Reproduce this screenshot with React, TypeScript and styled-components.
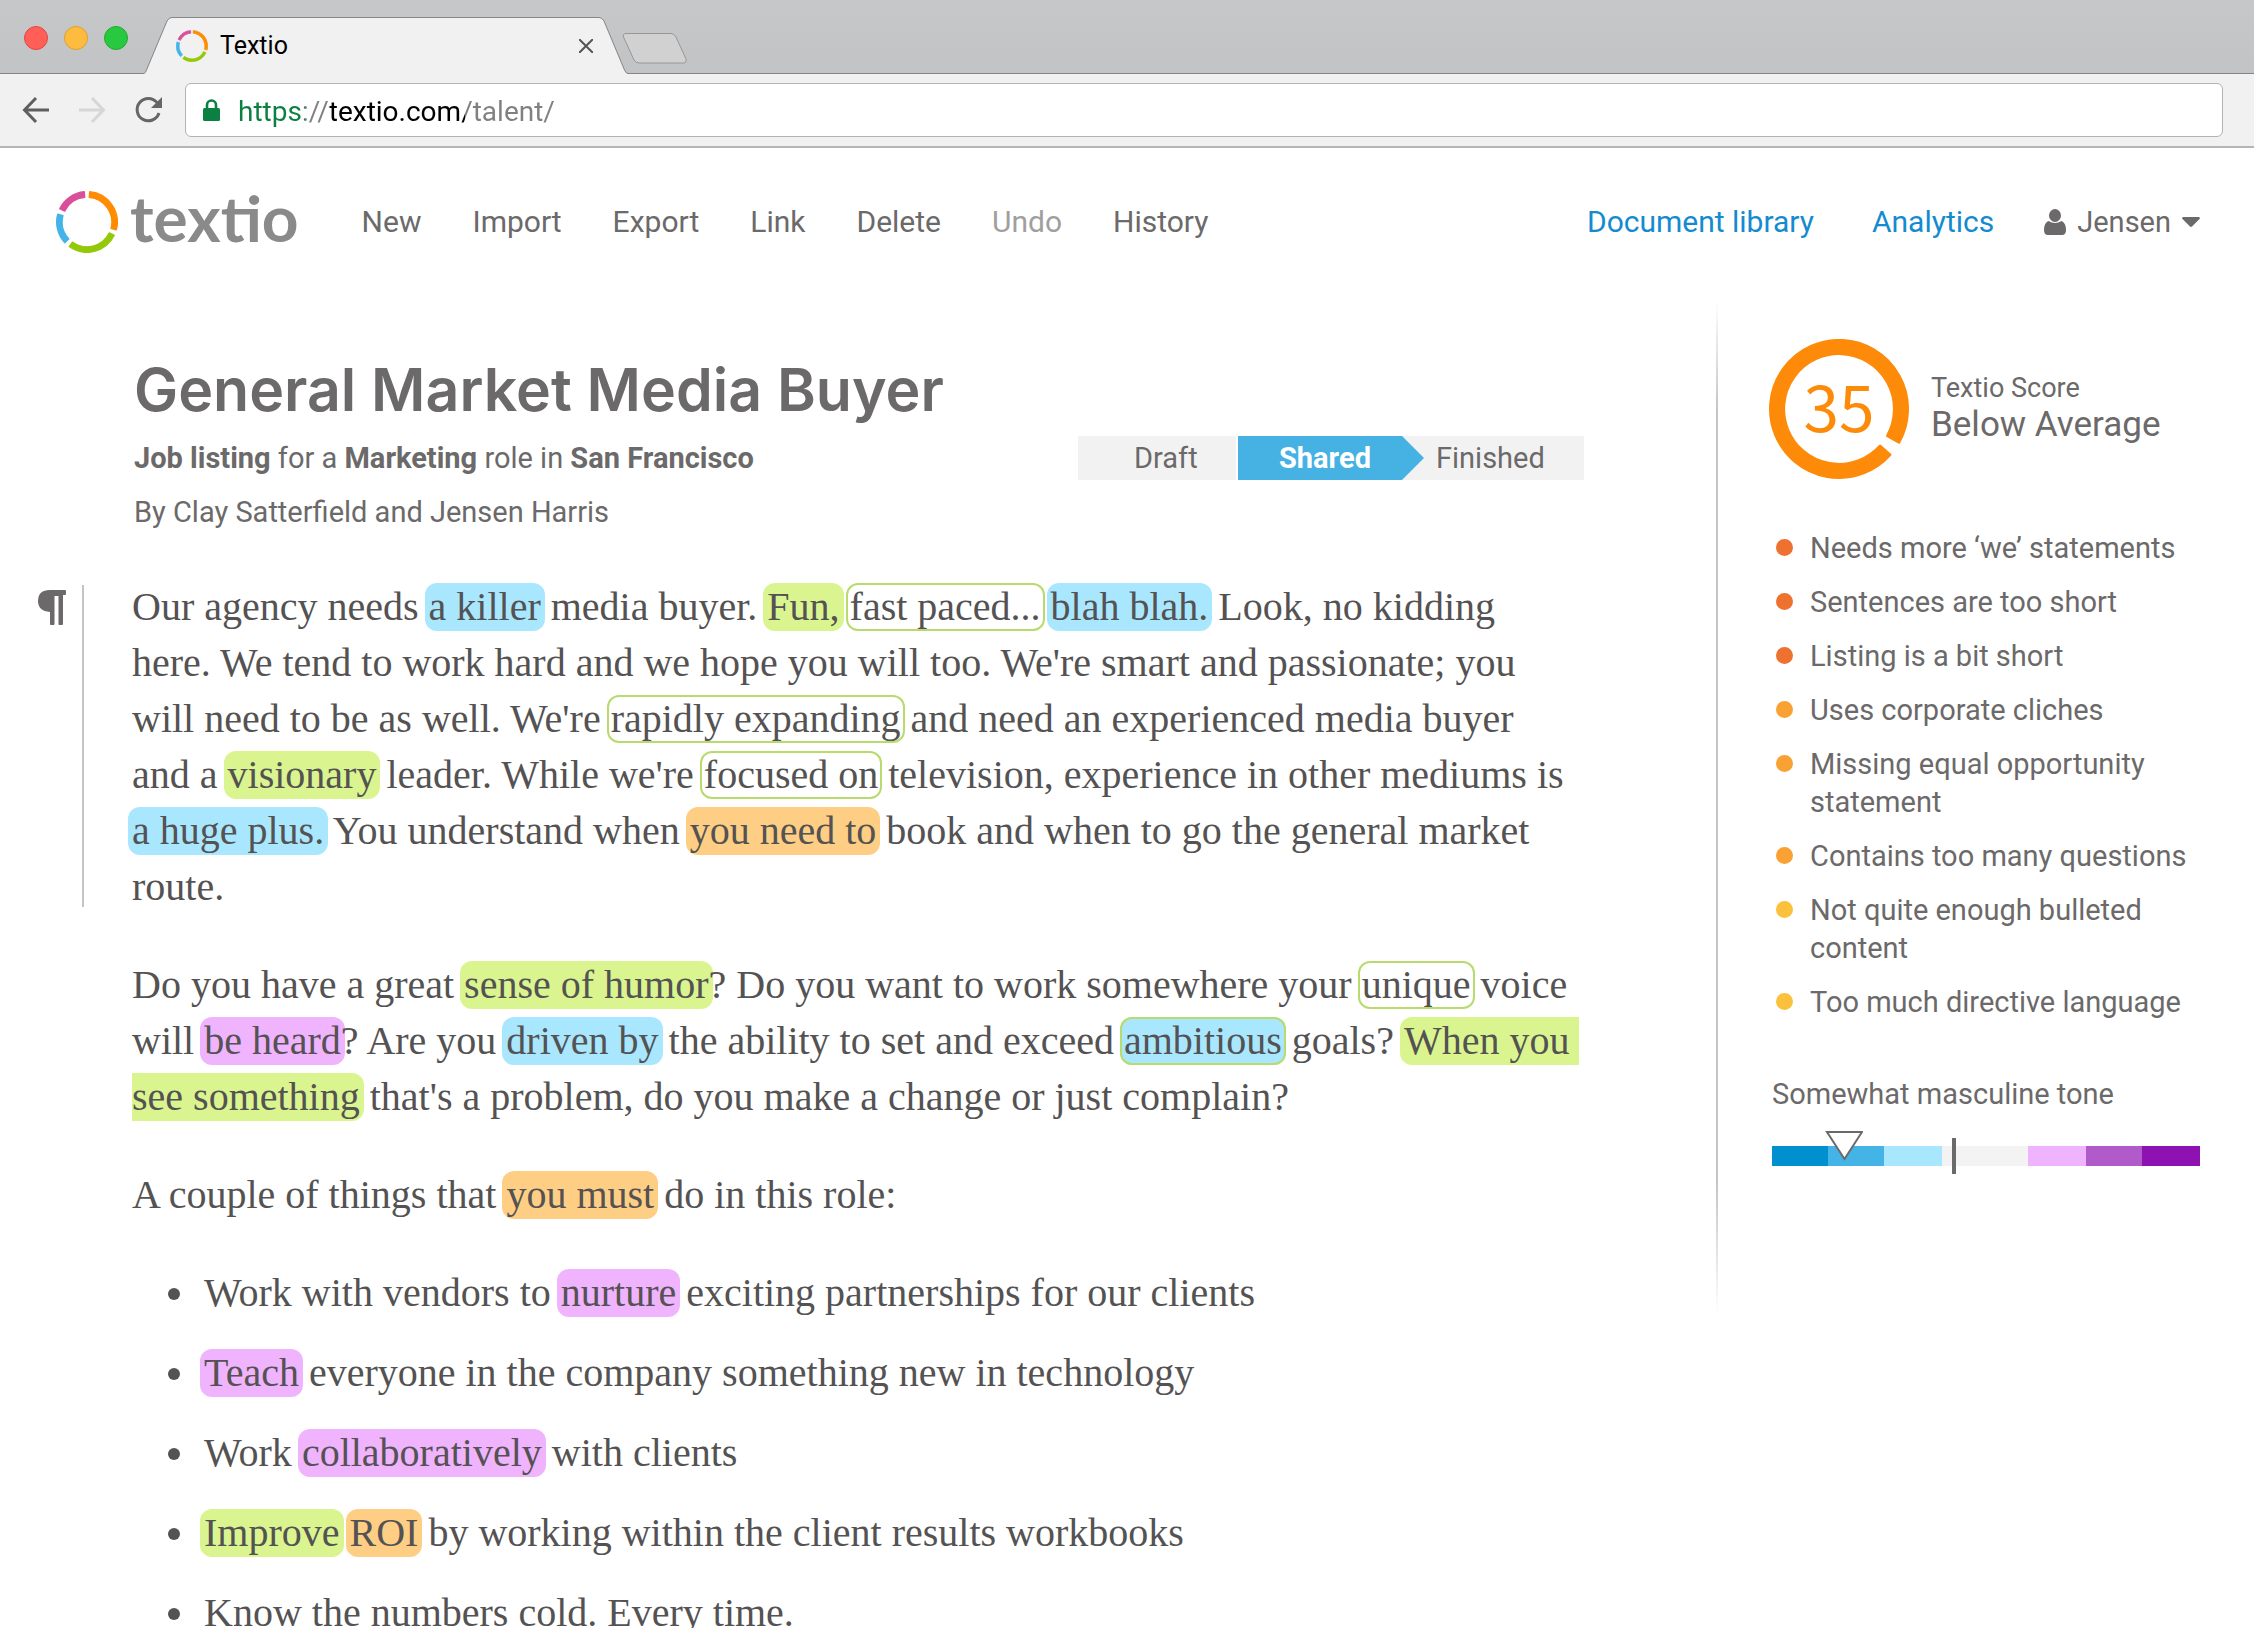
import React from "react";
import styled, { createGlobalStyle, css } from "styled-components";

const ink = "#6b6969";
const body = "#545252";
const sans = `Roboto, "Liberation Sans", sans-serif`;
const serif = `"Liberation Serif", serif`;

const GlobalStyle = createGlobalStyle`
  *, *::before, *::after { box-sizing: border-box; }
  body { margin: 0; background: #fff; color: ${ink}; font-family: ${sans}; }
  button, input { font: inherit; color: inherit; }
  h1, h2, p, ul, ol { margin: 0; padding: 0; }
`;

const Window = styled.div`
  display: flex;
  flex-direction: column;
  height: 100vh;
  overflow: hidden;
`;

/* ---------- browser chrome ---------- */

const TabStrip = styled.div`
  display: flex;
  flex: none;
  align-items: flex-end;
  height: 74px;
  padding-left: 24px;
  background: linear-gradient(#c5c7c9, #c2c3c5);
  box-shadow: inset 0 -1px #858585;
`;

const Lights = styled.div`
  display: flex;
  gap: 16px;
  align-self: flex-start;
  padding-top: 26px;
`;

const Light = styled.button<{ $fill: string; $edge: string }>`
  width: 24px;
  height: 24px;
  padding: 0;
  border: 1px solid ${(p) => p.$edge};
  border-radius: 50%;
  background: ${(p) => p.$fill};
`;

const Tab = styled.div`
  position: relative;
  display: flex;
  align-items: center;
  width: 484px;
  height: 57px;
  margin-left: 16px;
  padding: 0 35px 0 32px;
`;

const TabShape = styled.svg`
  position: absolute;
  inset: 0;
  width: 100%;
  height: 100%;
`;

const TabTitle = styled.span`
  position: relative;
  flex: 1;
  margin-left: 12px;
  color: #000;
  font-size: 25px;
  line-height: 32px;
`;

const TabIcon = styled.span`
  position: relative;
  display: flex;
`;

const IconButton = styled.button`
  position: relative;
  display: flex;
  padding: 0;
  border: 0;
  background: none;
`;

const NewTab = styled(IconButton)`
  align-self: flex-start;
  margin: 32px 0 0 -6px;
`;

const Toolbar = styled.div`
  display: flex;
  flex: none;
  align-items: center;
  gap: 28px;
  height: 74px;
  padding: 0 31px 0 22px;
  background: #f1f1f1;
  border-bottom: 2px solid #b5b5b5;
`;

const Address = styled.label`
  display: flex;
  flex: 1;
  align-items: center;
  height: 54px;
  margin-left: -5px;
  padding-left: 17px;
  gap: 18px;
  background: #fff;
  border: 1px solid #b3b3b3;
  border-radius: 6px;
`;

const AddressInput = styled.input`
  flex: 1;
  height: 40px;
  padding: 2px 0 0;
  border: 0;
  outline: 0;
  color: #000;
  font-size: 28px;
  line-height: 38px;
  background: linear-gradient(
    90deg,
    #0b8043 0 67px,
    #808080 67px 92px,
    #000 92px 227px,
    #808080 227px
  );
  background-clip: text;
  -webkit-background-clip: text;
  -webkit-text-fill-color: transparent;
`;

/* ---------- application header ---------- */

const Page = styled.div`
  flex: 1;
  min-height: 0;
  overflow: auto;
  scrollbar-width: none;
`;

const Header = styled.header`
  display: flex;
  align-items: center;
  height: 152px;
  padding: 0 54px 4px 56px;
`;

const Brand = styled.a`
  display: flex;
  align-items: center;
  gap: 12px;
  color: #8a8a8a;
  font-family: Lato, sans-serif;
  font-size: 64px;
  font-weight: 700;
  line-height: 64px;
  text-decoration: none;
`;

const BrandName = styled.span`
  padding-bottom: 8px;
`;

const Actions = styled.nav`
  display: flex;
  gap: 51px;
  margin-left: 63px;
`;

const Action = styled.button`
  padding: 0;
  border: 0;
  background: none;
  color: ${ink};
  font-size: 30px;
  line-height: 36px;
  &:disabled {
    color: #a09f9f;
  }
`;

const Account = styled.nav`
  display: flex;
  align-items: center;
  gap: 58px;
  margin-left: auto;
`;

const AccountLink = styled.a`
  color: #148bcf;
  font-size: 30px;
  line-height: 36px;
  text-decoration: none;
`;

const UserButton = styled(Action)`
  display: flex;
  align-items: center;
  gap: 11px;
  margin-left: -8px;
  font-size: 29px;
`;

/* ---------- document ---------- */

const Columns = styled.div`
  display: grid;
  grid-template-columns: minmax(0, 1fr) 538px;
`;

const Document = styled.main`
  padding: 58px 132px 0 38px;
`;

const Heading = styled.div`
  display: flex;
  align-items: flex-start;
  justify-content: space-between;
  padding-left: 96px;
`;

const Title = styled.h1`
  font-family: Inter, sans-serif;
  font-size: 59px;
  font-weight: 600;
  line-height: 64px;
`;

const Byline = styled.p`
  font-size: 29px;
  line-height: 36px;
  margin-top: 18px;
  b {
    font-weight: 700;
  }
`;

const TitleBlock = styled.div`
  white-space: nowrap;
`;

const Stages = styled.ol`
  display: flex;
  margin-top: 78px;
  list-style: none;
`;

const Stage = styled.button<{ $current?: boolean; $width: number; $indent: number }>`
  position: relative;
  display: block;
  width: ${(p) => p.$width}px;
  height: 44px;
  padding: 0 0 0 ${(p) => p.$indent}px;
  border: 0;
  background: #f2f2f2;
  color: ${ink};
  font-size: 29px;
  line-height: 44px;
  text-align: left;
  ${(p) =>
    p.$current &&
    css`
      z-index: 1;
      margin-left: 2px;
      background: #46b2e4;
      color: #fff;
      font-weight: 700;
      &::after {
        content: "";
        position: absolute;
        top: 0;
        left: 100%;
        border: 22px solid transparent;
        border-right-width: 0;
        border-left-color: #46b2e4;
      }
    `}
`;

const Editor = styled.article`
  display: flex;
  flex-direction: column;
  gap: 42px;
  margin-top: 49px;
  color: ${body};
  font-family: ${serif};
  font-size: 40px;
  line-height: 56px;
  white-space: nowrap;
`;

const Block = styled.div`
  padding-left: 94px;
`;

const ActiveBlock = styled.div`
  display: flex;
`;

const Marker = styled.div`
  flex: none;
  width: 46px;
  margin: 6px 48px 8px 0;
  border-right: 2px solid #c4c4c4;
`;

const Bullets = styled.ul`
  display: flex;
  flex-direction: column;
  gap: 24px;
  padding-left: 130px;
  list-style: none;
`;

const Bullet = styled.li`
  display: flex;
  align-items: center;
  &::before {
    content: "";
    width: 12px;
    height: 12px;
    margin: 2px 24px 0 0;
    border-radius: 50%;
    background: ${body};
  }
`;

const tones = {
  blue: "#a9e7ff",
  green: "#daf58f",
  orange: "#ffce85",
  purple: "#f0b4fe",
  plain: "transparent",
};

const Mark = styled.mark<{ $tone: keyof typeof tones; $outlined?: boolean }>`
  margin: 0 -4px;
  padding: 1px 4px 2px;
  border-radius: 12px;
  color: inherit;
  background: ${(p) => tones[p.$tone]};
  ${(p) => p.$outlined && "box-shadow: inset 0 0 0 2px #b9db6e;"}
`;

/* ---------- sidebar ---------- */

const Sidebar = styled.aside`
  position: relative;
  height: 1014px;
  padding: 39px 54px 0 56px;
  &::before {
    content: "";
    position: absolute;
    inset: 0 auto 0 0;
    width: 2px;
    background: linear-gradient(transparent, #c4c4c4 11%, #c4c4c4 87%, transparent);
  }
`;

const Score = styled.section`
  display: flex;
  align-items: center;
  margin-left: -3px;
`;

const Gauge = styled.div`
  position: relative;
  display: flex;
  align-items: center;
  justify-content: center;
  width: 140px;
  height: 140px;
  padding-bottom: 10px;
  color: #fd8b09;
  font-family: "Noto Sans CJK JP", sans-serif;
  font-size: 64px;
  line-height: 64px;
  svg {
    position: absolute;
    inset: 0;
  }
`;

const ScoreText = styled.div`
  margin-left: 22px;
  padding-bottom: 4px;
`;

const ScoreLabel = styled.h2`
  font-size: 27px;
  font-weight: 400;
  line-height: 36px;
`;

const ScoreValue = styled.p`
  font-size: 35px;
  line-height: 38px;
`;

const Tips = styled.ul`
  display: flex;
  flex-direction: column;
  gap: 16px;
  margin-top: 50px;
  padding-left: 4px;
  list-style: none;
`;

const Tip = styled.li<{ $color: string }>`
  display: flex;
  font-size: 29px;
  line-height: 38px;
  white-space: nowrap;
  &::before {
    content: "";
    flex: none;
    width: 17px;
    height: 17px;
    margin: 10px 17px 0 0;
    border-radius: 50%;
    background: ${(p) => p.$color};
  }
`;

const ToneLabel = styled.h2`
  margin-top: 54px;
  font-size: 29px;
  font-weight: 400;
  line-height: 38px;
`;

const ToneBar = styled.div`
  position: relative;
  display: flex;
  height: 20px;
  margin-top: 33px;
`;

const ToneStep = styled.span<{ $color: string; $grow: number }>`
  flex: ${(p) => p.$grow} 1 0;
  background: ${(p) => p.$color};
`;

const ToneCenter = styled.span`
  position: absolute;
  top: -8px;
  left: 42%;
  width: 4px;
  height: 36px;
  background: ${ink};
`;

const TonePointer = styled.svg`
  position: absolute;
  top: -15px;
  left: 12%;
`;

/* ---------- drawings ---------- */

const point = (deg: number, r: number) => {
  const a = (deg * Math.PI) / 180;
  return `${(50 + r * Math.cos(a)).toFixed(2)} ${(50 + r * Math.sin(a)).toFixed(2)}`;
};

/* A closed ring segment; its rounded outline adds one unit on every side. */
const segment = (from: number, to: number, inner: number, outer: number) => {
  const large = to - from > 180 ? 1 : 0;
  return (
    `M${point(from, outer)}A${outer} ${outer} 0 ${large} 1 ${point(to, outer)}` +
    `L${point(to, inner)}A${inner} ${inner} 0 ${large} 0 ${point(from, inner)}Z`
  );
};

const ringParts = [
  { color: "#ff8b00", from: -85, to: 15 },
  { color: "#94c90a", from: 26, to: 126 },
  { color: "#43b4e8", from: 137, to: 195 },
  { color: "#d94f9a", from: 206, to: 265 },
];

const Ring = ({ size }: { size: number }) => (
  <svg width={size} height={size} viewBox="0 0 100 100" strokeWidth="2" strokeLinejoin="round" aria-hidden="true">
    {ringParts.map((p) => (
      <path key={p.color} d={segment(p.from, p.to, 40, 49)} fill={p.color} stroke={p.color} />
    ))}
  </svg>
);

const tips: [string, string[]][] = [
  ["#ee7130", ["Needs more ‘we’ statements"]],
  ["#ee7130", ["Sentences are too short"]],
  ["#ee7130", ["Listing is a bit short"]],
  ["#f9a133", ["Uses corporate cliches"]],
  ["#f9a133", ["Missing equal opportunity", "statement"]],
  ["#f9a133", ["Contains too many questions"]],
  ["#fbc13d", ["Not quite enough bulleted", "content"]],
  ["#fbc13d", ["Too much directive language"]],
];

const toneSteps: [string, number][] = [
  ["#0090d0", 56],
  ["#44b3e6", 56],
  ["#a9e7ff", 58],
  ["#f3f3f3", 86],
  ["#f0b4fe", 58],
  ["#b05bc9", 56],
  ["#8e11b1", 58],
];

const Chrome = () => (
  <>
    <TabStrip>
      <Lights>
        <Light $fill="#ff5f57" $edge="#e2463f" aria-label="Close window" />
        <Light $fill="#fdbc40" $edge="#e0a028" aria-label="Minimize window" />
        <Light $fill="#28c940" $edge="#1dad2f" aria-label="Zoom window" />
      </Lights>
      <Tab>
        <TabShape viewBox="0 0 484 57" preserveAspectRatio="none" aria-hidden="true">
          <path
            d="M0 56.500Q1.500 56 2.500 53L23 4Q25 .5 28 .5H455Q458 .5 460 4L480.500 53Q482 56.500 484 56.500V58H0Z"
            fill="#f1f1f1"
          />
          <path
            d="M0 56.500Q1.500 56 2.500 53L23 4Q25 .5 28 .5H455Q458 .5 460 4L480.500 53Q482 56.500 484 56.500"
            fill="none"
            stroke="#858585"
          />
        </TabShape>
        <TabIcon>
          <Ring size={32} />
        </TabIcon>
        <TabTitle>Textio</TabTitle>
        <IconButton aria-label="Close tab">
          <svg width="14" height="14" viewBox="0 0 14 14" stroke="#555" strokeWidth="2">
            <path d="M0 0L14 14M14 0L0 14" />
          </svg>
        </IconButton>
      </Tab>
      <NewTab aria-label="New tab">
        <svg width="66" height="32" viewBox="0 0 66 32" fill="#d1d1d1" stroke="#979797">
          <path d="M4 1.5H49Q52 1.5 54 5L64 27Q65 31 61 31H17Q14 31 12 28L1.500 5Q.5 1.500 4 1.500Z" />
        </svg>
      </NewTab>
    </TabStrip>
    <Toolbar>
      <IconButton aria-label="Back">
        <svg width="28" height="28" viewBox="0 0 28 28" fill="none" stroke="#5f5f5f" strokeWidth="3">
          <path d="M27 14H3M14 2L2.500 14L14 26" />
        </svg>
      </IconButton>
      <IconButton aria-label="Forward" disabled>
        <svg width="28" height="28" viewBox="0 0 28 28" fill="none" stroke="#d6d6d6" strokeWidth="3">
          <path d="M1 14H25M14 2L25.500 14L14 26" />
        </svg>
      </IconButton>
      <IconButton aria-label="Reload">
        <svg width="28" height="28" viewBox="0 0 28 28" fill="none" stroke="#666" strokeWidth="3">
          <path d="M23 6.500A11.200 11.200 0 1 0 25 17" />
          <path d="M28 1V12H17Z" fill="#666" stroke="none" />
        </svg>
      </IconButton>
      <Address>
        <svg width="17" height="22" viewBox="0 0 17 22" aria-hidden="true">
          <path d="M4 10V6a4.500 4.500 0 0 1 9 0V10" fill="none" stroke="#0b8043" strokeWidth="2.600" />
          <rect y="9" width="17" height="13" rx="1.500" fill="#0b8043" />
        </svg>
        <AddressInput aria-label="Address" defaultValue="https://textio.com/talent/" spellCheck={false} />
      </Address>
    </Toolbar>
  </>
);

const AppHeader = () => (
  <Header>
    <Brand href="#home">
      <Ring size={62} />
      <BrandName>textio</BrandName>
    </Brand>
    <Actions>
      {["New", "Import", "Export", "Link", "Delete", "Undo", "History"].map((name) => (
        <Action key={name} disabled={name === "Undo"}>
          {name}
        </Action>
      ))}
    </Actions>
    <Account>
      <AccountLink href="#library">Document library</AccountLink>
      <AccountLink href="#analytics">Analytics</AccountLink>
      <UserButton aria-haspopup="menu">
        <svg width="22" height="26" viewBox="0 0 22 26" fill={ink} aria-hidden="true">
          <ellipse cx="11" cy="6.500" rx="6" ry="6.500" />
          <path d="M4.500 12Q11 16 17.500 12Q22 14 22 21Q22 26 18 26H4Q0 26 0 21Q0 14 4.500 12Z" />
        </svg>
        Jensen
        <svg width="18" height="10" viewBox="0 0 18 10" fill={ink} aria-hidden="true">
          <path d="M1 0H17Q18.500 .5 17.500 2L10 9.500Q9 10.300 8 9.500L.5 2Q-.5 .5 1 0Z" />
        </svg>
      </UserButton>
    </Account>
  </Header>
);

const Listing = () => (
  <Document>
    <Heading>
      <TitleBlock>
        <Title>General Market Media Buyer</Title>
        <Byline>
          <b>Job listing</b> for a <b>Marketing</b> role in <b>San Francisco</b>
        </Byline>
        <Byline>By Clay Satterfield and Jensen Harris</Byline>
      </TitleBlock>
      <Stages>
        <li>
          <Stage $width={158} $indent={56}>Draft</Stage>
        </li>
        <li>
          <Stage $width={164} $indent={41} $current aria-current="step">Shared</Stage>
        </li>
        <li>
          <Stage $width={182} $indent={34}>Finished</Stage>
        </li>
      </Stages>
    </Heading>
    <Editor>
      <ActiveBlock>
        <Marker>
          <svg width="28" height="36" viewBox="0 0 28 36" fill={ink} aria-hidden="true">
            <path d="M12 0H27Q28 0 28 1V4Q28 5 27 5H25V34Q25 35 24 35H21.500Q20.500 35 20.500 34V6H16.500V34Q16.500 35 15.500 35H13Q12 35 12 34V22Q0 21 0 11Q0 0 12 0Z" />
          </svg>
        </Marker>
        <p>
          Our agency needs <Mark $tone="blue">a killer</Mark> media buyer. <Mark $tone="green">Fun,</Mark>{" "}
          <Mark $tone="plain" $outlined>fast paced...</Mark> <Mark $tone="blue">blah blah.</Mark> Look, no kidding
          <br />
          here. We tend to work hard and we hope you will too. We're smart and passionate; you
          <br />
          will need to be as well. We're <Mark $tone="plain" $outlined>rapidly expanding</Mark> and need an
          experienced media buyer
          <br />
          and a <Mark $tone="green">visionary</Mark> leader. While we're{" "}
          <Mark $tone="plain" $outlined>focused on</Mark> television, experience in other mediums is
          <br />
          <Mark $tone="blue">a huge plus.</Mark> You understand when <Mark $tone="orange">you need to</Mark> book
          and when to go the general market
          <br />
          route.
        </p>
      </ActiveBlock>
      <Block as="p">
        Do you have a great <Mark $tone="green">sense of humor</Mark>? Do you want to work somewhere your{" "}
        <Mark $tone="plain" $outlined>unique</Mark> voice
        <br />
        will <Mark $tone="purple">be heard</Mark>? Are you <Mark $tone="blue">driven by</Mark> the ability to set
        and exceed <Mark $tone="blue" $outlined>ambitious</Mark> goals?{" "}
        <Mark $tone="green">
          When you&nbsp;
          <br />
          see something
        </Mark>{" "}
        that's a problem, do you make a change or just complain?
      </Block>
      <Block as="p">
        A couple of things that <Mark $tone="orange">you must</Mark> do in this role:
      </Block>
      <Bullets>
        <Bullet>
          <span>
            Work with vendors to <Mark $tone="purple">nurture</Mark> exciting partnerships for our clients
          </span>
        </Bullet>
        <Bullet>
          <span>
            <Mark $tone="purple">Teach</Mark> everyone in the company something new in technology
          </span>
        </Bullet>
        <Bullet>
          <span>
            Work <Mark $tone="purple">collaboratively</Mark> with clients
          </span>
        </Bullet>
        <Bullet>
          <span>
            <Mark $tone="green">Improve</Mark> <Mark $tone="orange">ROI</Mark> by working within the client results
            workbooks
          </span>
        </Bullet>
        <Bullet>
          <span>Know the numbers cold. Every time.</span>
        </Bullet>
      </Bullets>
    </Editor>
  </Document>
);

const Insights = () => (
  <Sidebar>
    <Score>
      <Gauge>
        <svg viewBox="0 0 100 100" strokeWidth="2" strokeLinejoin="round" aria-hidden="true">
          <path d={segment(42, 389, 39.5, 49)} fill="#fd8b09" stroke="#fd8b09" />
        </svg>
        35
      </Gauge>
      <ScoreText>
        <ScoreLabel>Textio Score</ScoreLabel>
        <ScoreValue>Below Average</ScoreValue>
      </ScoreText>
    </Score>
    <Tips>
      {tips.map(([color, lines]) => (
        <Tip key={lines[0]} $color={color}>
          <span>
            {lines[0]}
            {lines[1] && <br />}
            {lines[1]}
          </span>
        </Tip>
      ))}
    </Tips>
    <ToneLabel>Somewhat masculine tone</ToneLabel>
    <ToneBar role="img" aria-label="Tone scale">
      {toneSteps.map(([color, grow]) => (
        <ToneStep key={color} $color={color} $grow={grow} />
      ))}
      <ToneCenter />
      <TonePointer width="40" height="30" viewBox="0 0 40 30" fill="#fff" stroke={ink} strokeWidth="2">
        <path d="M4 1H39L21.500 28Z" />
      </TonePointer>
    </ToneBar>
  </Sidebar>
);

export default function App() {
  return (
    <Window>
      <GlobalStyle />
      <Chrome />
      <Page>
        <AppHeader />
        <Columns>
          <Listing />
          <Insights />
        </Columns>
      </Page>
    </Window>
  );
}
